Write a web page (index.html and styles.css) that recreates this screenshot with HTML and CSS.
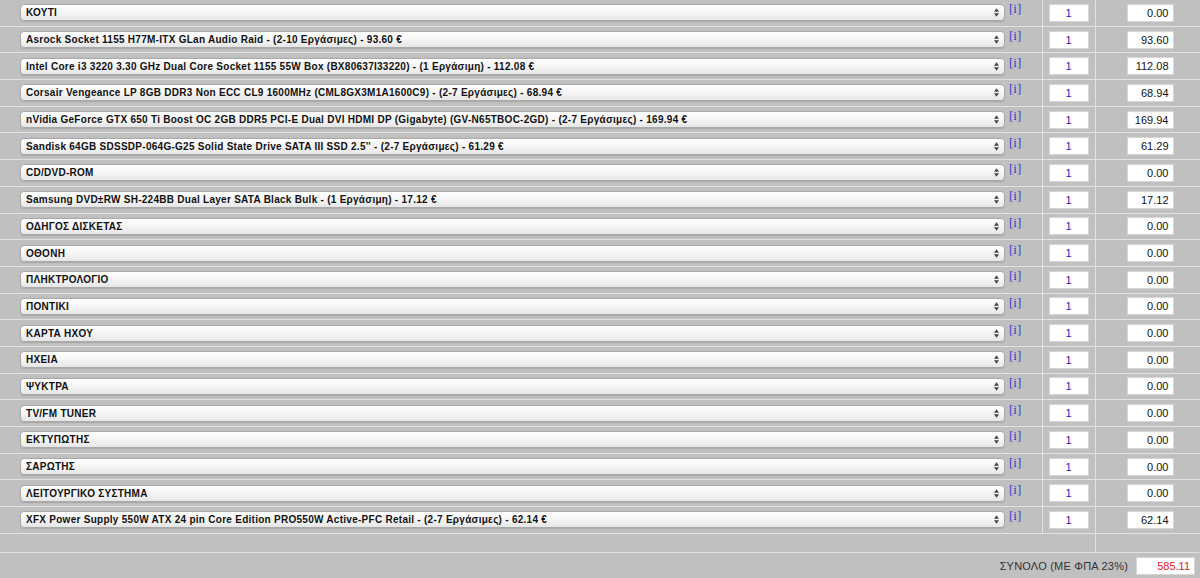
FILE: index.html
```html
<!DOCTYPE html>
<html>
    <head>
        <meta charset="UTF-8">
        <title>Συναρμολόγηση PC</title>
        <link rel="stylesheet" href="styles.css">
    </head>
    <body>
        <table class="parts">
            <colgroup><col class="c-item"><col class="c-qty"><col class="c-price"></colgroup>
            <tr><td class="item"><span class="pick"><select><option>ΚΟΥΤΙ</option></select><svg class="arrows" viewBox="0 0 6 10"><path d="M0 4 L3 0 L6 4Z M0 6 L3 10 L6 6Z"/></svg></span><a class="info" href="#">[i]</a></td><td class="qty"><input value="1"></td><td class="price"><input value="0.00"></td></tr>
            <tr><td class="item"><span class="pick"><select><option>Asrock Socket 1155 H77M-ITX GLan Audio Raid - (2-10 Εργάσιμες) - 93.60 €</option></select><svg class="arrows" viewBox="0 0 6 10"><path d="M0 4 L3 0 L6 4Z M0 6 L3 10 L6 6Z"/></svg></span><a class="info" href="#">[i]</a></td><td class="qty"><input value="1"></td><td class="price"><input value="93.60"></td></tr>
            <tr><td class="item"><span class="pick"><select><option>Intel Core i3 3220 3.30 GHz Dual Core Socket 1155 55W Box (BX80637I33220) - (1 Εργάσιμη) - 112.08 €</option></select><svg class="arrows" viewBox="0 0 6 10"><path d="M0 4 L3 0 L6 4Z M0 6 L3 10 L6 6Z"/></svg></span><a class="info" href="#">[i]</a></td><td class="qty"><input value="1"></td><td class="price"><input value="112.08"></td></tr>
            <tr><td class="item"><span class="pick"><select><option>Corsair Vengeance LP 8GB DDR3 Non ECC CL9 1600MHz (CML8GX3M1A1600C9) - (2-7 Εργάσιμες) - 68.94 €</option></select><svg class="arrows" viewBox="0 0 6 10"><path d="M0 4 L3 0 L6 4Z M0 6 L3 10 L6 6Z"/></svg></span><a class="info" href="#">[i]</a></td><td class="qty"><input value="1"></td><td class="price"><input value="68.94"></td></tr>
            <tr><td class="item"><span class="pick"><select><option>nVidia GeForce GTX 650 Ti Boost OC 2GB DDR5 PCI-E Dual DVI HDMI DP (Gigabyte) (GV-N65TBOC-2GD) - (2-7 Εργάσιμες) - 169.94 €</option></select><svg class="arrows" viewBox="0 0 6 10"><path d="M0 4 L3 0 L6 4Z M0 6 L3 10 L6 6Z"/></svg></span><a class="info" href="#">[i]</a></td><td class="qty"><input value="1"></td><td class="price"><input value="169.94"></td></tr>
            <tr><td class="item"><span class="pick"><select><option>Sandisk 64GB SDSSDP-064G-G25 Solid State Drive SATA III SSD 2.5'' - (2-7 Εργάσιμες) - 61.29 €</option></select><svg class="arrows" viewBox="0 0 6 10"><path d="M0 4 L3 0 L6 4Z M0 6 L3 10 L6 6Z"/></svg></span><a class="info" href="#">[i]</a></td><td class="qty"><input value="1"></td><td class="price"><input value="61.29"></td></tr>
            <tr><td class="item"><span class="pick"><select><option>CD/DVD-ROM</option></select><svg class="arrows" viewBox="0 0 6 10"><path d="M0 4 L3 0 L6 4Z M0 6 L3 10 L6 6Z"/></svg></span><a class="info" href="#">[i]</a></td><td class="qty"><input value="1"></td><td class="price"><input value="0.00"></td></tr>
            <tr><td class="item"><span class="pick"><select><option>Samsung DVD±RW SH-224BB Dual Layer SATA Black Bulk - (1 Εργάσιμη) - 17.12 €</option></select><svg class="arrows" viewBox="0 0 6 10"><path d="M0 4 L3 0 L6 4Z M0 6 L3 10 L6 6Z"/></svg></span><a class="info" href="#">[i]</a></td><td class="qty"><input value="1"></td><td class="price"><input value="17.12"></td></tr>
            <tr><td class="item"><span class="pick"><select><option>ΟΔΗΓΟΣ ΔΙΣΚΕΤΑΣ</option></select><svg class="arrows" viewBox="0 0 6 10"><path d="M0 4 L3 0 L6 4Z M0 6 L3 10 L6 6Z"/></svg></span><a class="info" href="#">[i]</a></td><td class="qty"><input value="1"></td><td class="price"><input value="0.00"></td></tr>
            <tr><td class="item"><span class="pick"><select><option>ΟΘΟΝΗ</option></select><svg class="arrows" viewBox="0 0 6 10"><path d="M0 4 L3 0 L6 4Z M0 6 L3 10 L6 6Z"/></svg></span><a class="info" href="#">[i]</a></td><td class="qty"><input value="1"></td><td class="price"><input value="0.00"></td></tr>
            <tr><td class="item"><span class="pick"><select><option>ΠΛΗΚΤΡΟΛΟΓΙΟ</option></select><svg class="arrows" viewBox="0 0 6 10"><path d="M0 4 L3 0 L6 4Z M0 6 L3 10 L6 6Z"/></svg></span><a class="info" href="#">[i]</a></td><td class="qty"><input value="1"></td><td class="price"><input value="0.00"></td></tr>
            <tr><td class="item"><span class="pick"><select><option>ΠΟΝΤΙΚΙ</option></select><svg class="arrows" viewBox="0 0 6 10"><path d="M0 4 L3 0 L6 4Z M0 6 L3 10 L6 6Z"/></svg></span><a class="info" href="#">[i]</a></td><td class="qty"><input value="1"></td><td class="price"><input value="0.00"></td></tr>
            <tr><td class="item"><span class="pick"><select><option>ΚΑΡΤΑ ΗΧΟΥ</option></select><svg class="arrows" viewBox="0 0 6 10"><path d="M0 4 L3 0 L6 4Z M0 6 L3 10 L6 6Z"/></svg></span><a class="info" href="#">[i]</a></td><td class="qty"><input value="1"></td><td class="price"><input value="0.00"></td></tr>
            <tr><td class="item"><span class="pick"><select><option>ΗΧΕΙΑ</option></select><svg class="arrows" viewBox="0 0 6 10"><path d="M0 4 L3 0 L6 4Z M0 6 L3 10 L6 6Z"/></svg></span><a class="info" href="#">[i]</a></td><td class="qty"><input value="1"></td><td class="price"><input value="0.00"></td></tr>
            <tr><td class="item"><span class="pick"><select><option>ΨΥΚΤΡΑ</option></select><svg class="arrows" viewBox="0 0 6 10"><path d="M0 4 L3 0 L6 4Z M0 6 L3 10 L6 6Z"/></svg></span><a class="info" href="#">[i]</a></td><td class="qty"><input value="1"></td><td class="price"><input value="0.00"></td></tr>
            <tr><td class="item"><span class="pick"><select><option>TV/FM TUNER</option></select><svg class="arrows" viewBox="0 0 6 10"><path d="M0 4 L3 0 L6 4Z M0 6 L3 10 L6 6Z"/></svg></span><a class="info" href="#">[i]</a></td><td class="qty"><input value="1"></td><td class="price"><input value="0.00"></td></tr>
            <tr><td class="item"><span class="pick"><select><option>ΕΚΤΥΠΩΤΗΣ</option></select><svg class="arrows" viewBox="0 0 6 10"><path d="M0 4 L3 0 L6 4Z M0 6 L3 10 L6 6Z"/></svg></span><a class="info" href="#">[i]</a></td><td class="qty"><input value="1"></td><td class="price"><input value="0.00"></td></tr>
            <tr><td class="item"><span class="pick"><select><option>ΣΑΡΩΤΗΣ</option></select><svg class="arrows" viewBox="0 0 6 10"><path d="M0 4 L3 0 L6 4Z M0 6 L3 10 L6 6Z"/></svg></span><a class="info" href="#">[i]</a></td><td class="qty"><input value="1"></td><td class="price"><input value="0.00"></td></tr>
            <tr><td class="item"><span class="pick"><select><option>ΛΕΙΤΟΥΡΓΙΚΟ ΣΥΣΤΗΜΑ</option></select><svg class="arrows" viewBox="0 0 6 10"><path d="M0 4 L3 0 L6 4Z M0 6 L3 10 L6 6Z"/></svg></span><a class="info" href="#">[i]</a></td><td class="qty"><input value="1"></td><td class="price"><input value="0.00"></td></tr>
            <tr><td class="item"><span class="pick"><select><option>XFX Power Supply 550W ATX 24 pin Core Edition PRO550W Active-PFC Retail - (2-7 Εργάσιμες) - 62.14 €</option></select><svg class="arrows" viewBox="0 0 6 10"><path d="M0 4 L3 0 L6 4Z M0 6 L3 10 L6 6Z"/></svg></span><a class="info" href="#">[i]</a></td><td class="qty"><input value="1"></td><td class="price"><input value="62.14"></td></tr>
            <tr class="gap"><td colspan="2"></td><td></td></tr>
            <tr class="sum"><td colspan="3"><span class="sum-label">ΣΥΝΟΛΟ (ΜΕ ΦΠΑ 23%)</span><input class="sum-value" value="585.11"></td></tr>
        </table>
    </body>
</html>
```

FILE: styles.css
```css
html{
    background-color: #c0c0c0;
}
body{
    margin: 0;
    font-family: "Liberation Sans", "DejaVu Sans", sans-serif;
    font-size: 11px;
    color: #222;
}
.parts{
    width: 1200px;
    table-layout: fixed;
    border-collapse: collapse;
    border-spacing: 0;
}
.c-item{ width: 1042px; }
.c-qty{ width: 53px; }
.c-price{ width: 105px; }
.parts td{
    padding: 0;
    height: 25.7px;
    border-bottom: 1px solid #e2e2e2;
    vertical-align: middle;
    white-space: nowrap;
}
.item{
    padding-left: 20px !important;
}
.pick{
    position: relative;
    display: inline-block;
    vertical-align: middle;
}
.pick select{
    -webkit-appearance: none;
    appearance: none;
    width: 985px;
    height: 17px;
    margin: 0;
    padding: 0 20px 0 5px;
    border: 1px solid #a9a9a9;
    border-radius: 4px;
    background: linear-gradient(#ffffff, #f4f4f4 55%, #e6e6e6);
    box-shadow: 0 1px 1px rgba(0,0,0,0.12);
    font-family: "Liberation Sans", "DejaVu Sans", sans-serif;
    font-size: 10px;
    font-weight: bold;
    letter-spacing: 0.27px;
    color: #111;
    display: block;
}
.arrows{
    position: absolute;
    right: 6px;
    top: 4px;
    width: 5px;
    height: 9px;
    fill: #444;
}
.info{
    display: inline-block;
    vertical-align: middle;
    margin: -7px 0 0 4px;
    font-family: "Liberation Serif", serif;
    font-size: 13px;
    color: #3a3acc;
    text-decoration: none;
}
.qty{
    border-left: 1px solid #e2e2e2;
    border-right: 1px solid #e2e2e2;
    padding-left: 6px !important;
}
.qty input{
    width: 40px;
    height: 18px;
    box-sizing: border-box;
    border: 1px solid #d6d6d6;
    background: #fff;
    text-align: center;
    font-family: "Liberation Sans", "DejaVu Sans", sans-serif;
    font-size: 11px;
    color: #1c1ccc;
    padding: 0;
    display: block;
}
.price{
    padding-left: 31px !important;
}
.price input{
    width: 47px;
    height: 18px;
    box-sizing: border-box;
    border: 1px solid #d6d6d6;
    background: #fff;
    text-align: right;
    font-family: "Liberation Sans", "DejaVu Sans", sans-serif;
    font-size: 11px;
    color: #111;
    padding: 0 4px 0 0;
    display: block;
}
.gap td{
    height: 18px;
}
.gap td:first-child{
    border-right: 1px solid #e2e2e2;
}
.sum td{
    border-bottom: none;
    height: 26px;
    text-align: right;
    padding-right: 5px;
}
.sum-label{
    color: #333;
    font-size: 11px;
    letter-spacing: 0.2px;
    vertical-align: middle;
}
.sum-value{
    width: 59px;
    height: 18px;
    box-sizing: border-box;
    margin-left: 8px;
    border: 1px solid #d6d6d6;
    background: #fff;
    text-align: right;
    font-family: "Liberation Sans", "DejaVu Sans", sans-serif;
    font-size: 11px;
    color: #e02020;
    padding: 0 4px 0 0;
    vertical-align: middle;
}
```
